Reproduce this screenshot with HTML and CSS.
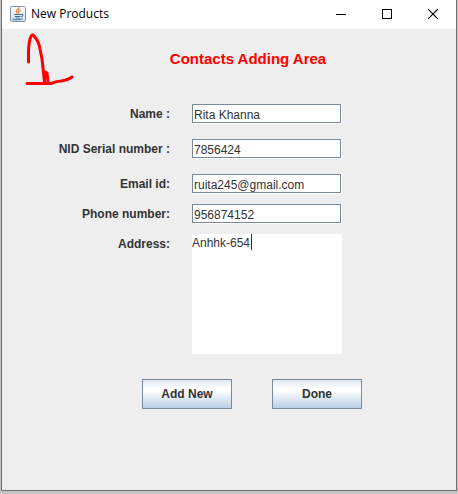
FILE: index.html
```
<!DOCTYPE html>
<html lang="en">
<head>
<meta charset="utf-8">
<title>New Products</title>
<link rel="stylesheet" href="styles.css">
</head>
<body>
<main class="window">
  <header class="titlebar">
    <svg class="app-icon" width="16" height="16" viewBox="0 0 16 16" aria-hidden="true">
      <defs><linearGradient id="tile" x1="0" y1="0" x2="0" y2="1"><stop offset="0" stop-color="#fafafa"/><stop offset="1" stop-color="#d5dfe7"/></linearGradient></defs>
      <rect x=".5" y=".5" width="15" height="15" rx="1" fill="url(#tile)" stroke="#7d95a8"/>
      <path d="M9 1.500C9.300 3.500 6 4 6.300 5.600Q6.500 6.500 7.500 7.500M10.500 3.800C8.500 4.500 8 5.300 8.800 6.200Q9.200 6.800 8.500 7.500" fill="none" stroke="#e8843c" stroke-width="1.400"/>
      <path d="M4 8.500h7M4.800 10.500h5.500M5.500 12h4M11 8.500q2.300-.3 1.800 1-.5 1.100-2 1.300M3 12.500q-.5 1 2 1.200 4.500.3 7.500-1" fill="none" stroke="#41769f" stroke-width="1.100"/>
    </svg>
    <h1 class="window-title">New Products</h1>
    <button class="control" type="button" aria-label="Minimize"><svg width="10" height="10" viewBox="0 0 10 10"><path d="M0 5.500h10" stroke="#000"/></svg></button>
    <button class="control" type="button" aria-label="Maximize"><svg width="10" height="10" viewBox="0 0 10 10"><rect x=".5" y=".5" width="9" height="9" fill="none" stroke="#000"/></svg></button>
    <button class="control" type="button" aria-label="Close"><svg width="10" height="10" viewBox="0 0 10 10"><path d="M0 0l10 10M10 0L0 10" stroke="#000" stroke-width="1.200"/></svg></button>
  </header>
  <form class="content">
    <svg class="scribble" width="52" height="58" viewBox="0 0 52 58" aria-hidden="true">
      <path d="M6.500 33V22Q7 11 9 7.500Q10.500 4 12.500 7.500Q17 13 18 20L20 30L22.500 53V43L25 44L26 53M5 54.500H29Q35 52 39 52Q46 51 50 48" fill="none" stroke="#f00" stroke-width="3" stroke-linecap="round" stroke-linejoin="round"/>
    </svg>
    <h2 class="heading">Contacts Adding Area</h2>
    <div class="fields">
      <label for="name">Name :</label>
      <input class="field spaced" id="name" type="text" value="Rita Khanna">
      <label for="nid">NID Serial number :</label>
      <input class="field spaced" id="nid" type="text" value="7856424">
      <label for="email">Email id:</label>
      <input class="field" id="email" type="text" value="ruita245@gmail.com">
      <label for="phone">Phone number:</label>
      <input class="field" id="phone" type="text" value="956874152">
      <label for="address">Address:</label>
      <div class="area">
        <textarea id="address">Anhhk-654</textarea>
        <span class="caret"></span>
      </div>
    </div>
    <div class="actions">
      <button class="action" type="button">Add New</button>
      <button class="action" type="button">Done</button>
    </div>
  </form>
</main>
</body>
</html>
```
FILE: styles.css
```
* {
  box-sizing: border-box;
}

body {
  margin: 0;
  min-height: 100vh;
  display: flex;
  padding: 0 1px 3px;
  background: #c4c4c4;
  font: 12px/16px "Liberation Sans", Arial, sans-serif;
  color: #333;
}

.window {
  flex: 1;
  display: flex;
  flex-direction: column;
  border: 1px solid #6e6e6e;
  border-top: 0;
  background: #eee;
}

.titlebar {
  display: flex;
  align-items: center;
  height: 29px;
  padding: 0 0 2px 8px;
  background: #fff;
}

.window-title {
  flex: 1;
  margin: 0 0 0 5px;
  font: 12px/16px "Open Sans", "Noto Sans", sans-serif;
  color: #000;
}

.control {
  display: grid;
  place-items: center;
  width: 46px;
  height: 27px;
  padding: 0;
  border: 0;
  background: none;
}

.content {
  position: relative;
  flex: 1;
}

.scribble {
  position: absolute;
  left: 20px;
  top: 0;
}

.heading {
  margin: 0;
  padding: 20px 0 35px 38px;
  text-align: center;
  font-size: 15px;
  line-height: 20px;
  color: #f00;
}

.fields {
  display: grid;
  grid-template-columns: 168fr 150fr 92fr;
  column-gap: 22px;
  row-gap: 10px;
}

.fields label {
  grid-column: 1;
  padding-top: 2px;
  text-align: right;
  font-weight: bold;
}

.field {
  height: 19px;
  margin: 0 1px 1px 0;
  padding: 2px 1px 0;
  min-width: 0;
  border: 1px solid #7a8a99;
  border-radius: 0;
  box-shadow: 1px 1px 0 #fff;
  background: #fff;
  font: inherit;
  color: inherit;
  outline: 0;
}

.spaced {
  margin-bottom: 6px;
}

.area {
  position: relative;
  height: 120px;
}

.area textarea {
  display: block;
  width: 100%;
  height: 100%;
  padding: 1px 0;
  border: 0;
  background: #fff;
  font: inherit;
  color: inherit;
  resize: none;
  outline: 0;
}

.caret {
  position: absolute;
  left: 59px;
  top: 0;
  width: 1px;
  height: 16px;
  background: #333;
}

.actions {
  display: flex;
  justify-content: center;
  gap: 40px;
  padding: 25px 0 20px 46px;
}

.action {
  width: 90px;
  height: 30px;
  padding: 0;
  border: 1px solid #7a8a99;
  border-radius: 0;
  background: linear-gradient(#dde8f3, #fff 30%, #fff 38%, #b8cfe5);
  font: bold 12px/16px "Liberation Sans", Arial, sans-serif;
  color: #333;
}
```
